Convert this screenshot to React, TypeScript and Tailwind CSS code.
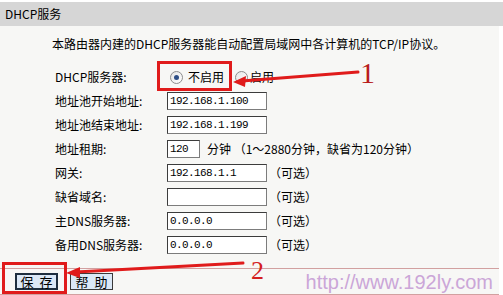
import React from 'react'

const cjk = { fontFamily: '"Noto Sans CJK SC", "Noto Sans", sans-serif' }
const mono = { fontFamily: '"Liberation Mono", "DejaVu Sans Mono", monospace' }
const serif = { fontFamily: '"Liberation Serif", "DejaVu Serif", serif' }

function Field({ value, w = 'w-[100px]' }: { value: string; w?: string }) {
  return (
    <div
      className={`${w} h-[18px] bg-white border border-[#7c7c7c] border-t-[#3c3c3c] border-l-[#3c3c3c] flex items-center pl-[2px] text-[11px] tracking-[-0.6px] text-black leading-none`}
      style={mono}
    >
      {value}
    </div>
  )
}

function Radio({ checked }: { checked?: boolean }) {
  return (
    <span className="w-[13px] h-[13px] rounded-full border border-[#8d8d8d] bg-gradient-to-br from-[#e6e6e6] to-white flex items-center justify-center">
      {checked && <span className="w-[5px] h-[5px] rounded-full bg-[#2f4f86]" />}
    </span>
  )
}

const rows: { label: string; value?: string; note?: string }[] = [
  { label: '地址池开始地址:', value: '192.168.1.100' },
  { label: '地址池结束地址:', value: '192.168.1.199' },
  { label: '地址租期:' },
  { label: '网关:', value: '192.168.1.1', note: '（可选）' },
  { label: '缺省域名:', value: '', note: '（可选）' },
  { label: '主DNS服务器:', value: '0.0.0.0', note: '（可选）' },
  { label: '备用DNS服务器:', value: '0.0.0.0', note: '（可选）' },
]

export default function App() {
  return (
    <div className="relative w-[503px] h-[295px] overflow-hidden bg-white text-black text-[12px]" style={cjk}>
      <div className="mt-[2px] h-[24px] bg-[#d6d6d6] flex items-center pl-[5px] leading-none">DHCP服务</div>

      <div className="bg-[#f7f7f5] h-[269px] mr-[4px] flex flex-col">
        <p className="mt-[10px] h-[16px] leading-[16px] pl-[52px]">
          本路由器内建的DHCP服务器能自动配置局域网中各计算机的TCP/IP协议。
        </p>

        <div className="mt-[13px] pl-[55px] flex flex-col">
          <div className="h-[24px] flex items-center">
            <span className="w-[112px]">DHCP服务器:</span>
            <span className="ml-[3px] flex items-center gap-[5px]">
              <Radio checked />
              <span>不启用</span>
            </span>
            <span className="ml-[11px] flex items-center gap-[2px]">
              <Radio />
              <span>启用</span>
            </span>
          </div>

          {rows.map((r) => (
            <div key={r.label} className="h-[24px] flex items-center">
              <span className="w-[112px]">{r.label}</span>
              {r.value === undefined ? (
                <>
                  <Field value="120" w="w-[33px]" />
                  <span className="ml-[7px]">分钟 （1～2880分钟，缺省为120分钟）</span>
                </>
              ) : (
                <>
                  <Field value={r.value} />
                  {r.note && <span className="ml-[2px]">{r.note}</span>}
                </>
              )}
            </div>
          ))}
        </div>

        <div className="mt-auto h-[27px] border-t border-b border-[#d2a0a0] flex items-center gap-[12px] pl-[15px]">
          <button className="w-[43px] h-[17px] bg-[#dbe8f6] border-2 border-[#1e2e3e] text-[13px] leading-none flex items-center justify-center gap-[6px]">
            <span>保</span>
            <span>存</span>
          </button>
          <button className="w-[43px] h-[17px] bg-[#dbe8f6] border border-[#3a3a3a] text-[13px] leading-none flex items-center justify-center gap-[6px]">
            <span>帮</span>
            <span>助</span>
          </button>
          <span className="ml-auto mr-[6px] text-[20px] leading-none text-[#cba6d8]" style={{ fontFamily: '"Liberation Sans", Arial, sans-serif' }}>
            http://www.192ly.com
          </span>
        </div>
      </div>

      {/* annotations */}
      <div className="absolute left-[157px] top-[61px] w-[75px] h-[30px] border-[3px] border-[#e01b1b]" />
      <div className="absolute left-[2px] top-[262px] w-[65px] h-[32px] border-[3px] border-[#e01b1b]" />
      <span className="absolute left-[360px] top-[58px] text-[30px] leading-none text-[#b81c1c]" style={serif}>1</span>
      <span className="absolute left-[251px] top-[258px] text-[26px] leading-none text-[#d42020]" style={serif}>2</span>
      <svg className="absolute left-0 top-0" width="503" height="295" viewBox="0 0 503 295">
        <g stroke="#e01b1b" strokeWidth="3" strokeLinecap="round" fill="none">
          <line x1="358" y1="72" x2="242" y2="81" />
          <line x1="243" y1="263" x2="76" y2="272" />
        </g>
        <g fill="#e01b1b">
          <polygon points="233,82 246,76 245,87" />
          <polygon points="66,273 80,267 80,278" />
        </g>
      </svg>
    </div>
  )
}
